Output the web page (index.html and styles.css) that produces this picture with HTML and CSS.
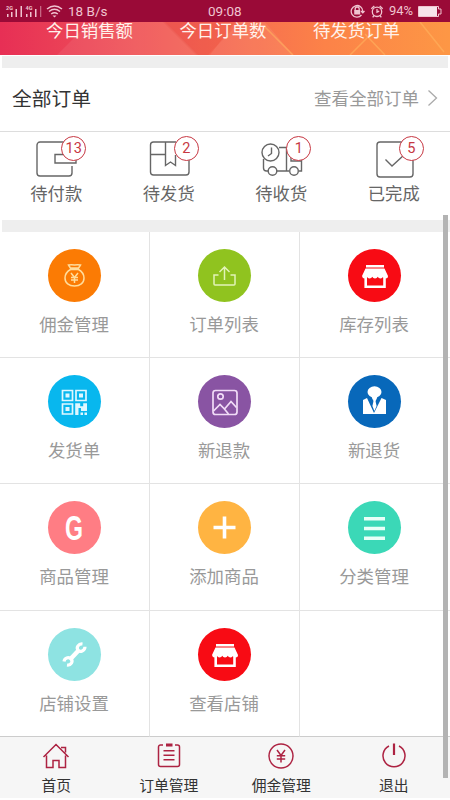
FILE: index.html
```html
<!DOCTYPE html>
<html lang="zh-CN">
<head>
<meta charset="utf-8">
<meta name="viewport" content="width=device-width, initial-scale=1">
<title>全部订单</title>
<link rel="stylesheet" href="styles.css">
</head>
<body>
<svg class="defs" aria-hidden="true">
  <symbol id="shop" viewBox="0 0 53 53">
    <path fill="#fff" d="M18 16h18v2.500H18zM17.500 19.500h19L40 27q0 2.500-2.500 2.500T35 27.800q-.5 1.700-2.500 1.700t-2.700-1.700Q29 29.500 27 29.500t-2.700-1.700Q23.500 29.500 21.500 29.500T19 27.800q-.5 1.700-2.500 1.700T14 27z"/>
    <path fill="none" stroke="#fff" stroke-width="2.600" d="M17.700 28v9.700h18.800V28"/>
  </symbol>
</svg>
<div class="screen">
  <header class="status">
    <svg class="signals" width="57" height="22" viewBox="0 0 57 22">
      <g fill="#f0c4d0"><path d="M7 14h1.500v3H7zM11 12h1.500v5H11zM15.500 9H17v8h-1.500zM20.500 6H22v11h-1.500zM26 14h1.500v3H26zM30 12h1.500v5H30zM35 9h1.500v8H35z"/><path opacity=".5" d="M40 6h1.300v11H40z"/></g>
      <text x="6" y="10" class="gen">2G</text><text x="25.500" y="10" class="gen">4G</text>
      <g fill="none" stroke="#f0c4d0" stroke-width="1.500"><path d="M47 9q7.500-6 15 0M49 11.500q5.500-4.500 11 0M51.200 14q3.300-2.600 6.600 0"/></g><path fill="#f0c4d0" d="M52.500 15.500h4l-2 2z"/>
    </svg>
    <span class="speed">18 B/s</span>
    <span class="time">09:08</span>
    <svg class="sys" width="38" height="22" viewBox="0 0 38 22">
      <g fill="none" stroke="#f0c4d0" stroke-width="1.300"><path d="M11.500 15a5.800 5.800 0 1 1 1.300-3.500M11 11l1.800 1.800L14.500 11M5.200 10.500V9a2 2 0 0 1 4 0v1.500"/><circle cx="27" cy="11.800" r="4.700"/><path d="M27 9v3.200l2.200-1M21.300 8.800l3-2.800M32.700 8.800l-3-2.800M24 15.500l-1.300 1.800M30 15.500l1.300 1.800"/></g><path fill="#f0c4d0" d="M4.200 10h6v4.500h-6z"/>
    </svg>
    <span class="percent">94%</span>
    <svg class="battery" width="26" height="22" viewBox="0 0 26 22"><path fill="none" stroke="#f0c4d0" d="M1.500 6.500h20v2.500H24v5h-2.500v2.500h-20z"/><path fill="#f7e3ea" d="M2 7h18v9H2z"/></svg>
  </header>

  <section class="banner">
    <svg class="facets" width="450" height="33" viewBox="0 0 450 33">
      <path fill="#fff" opacity=".07" d="M57 33 90 0h75l33 33zM210 33l25-33h30l28 33z"/>
      <path fill="#d8302a" opacity=".13" d="M163 0l33 33h12L240 0z"/>
      <path fill="none" stroke="#ffb45f" stroke-width="1.500" opacity=".6" d="M265 5l28 28M350 33l22-22M365 12l20 21M420 0l24 30"/>
    </svg>
    <span>今日销售额</span><span>今日订单数</span><span>待发货订单</span>
  </section>

  <div class="gap gap-top"></div>

  <section class="orders">
    <div class="orders-head">
      <h1>全部订单</h1>
      <a>查看全部订单<svg width="12" height="18" viewBox="0 0 12 18"><path fill="none" stroke="#aaa" stroke-width="1.300" d="M1.500 1.500 9.500 9l-8 7.500"/></svg></a>
    </div>
    <div class="order-types">
      <div class="order"><div class="pic">
        <svg width="42" height="42" viewBox="0 0 42 42"><path d="M30 4H4a3 3 0 0 0-3 3v28a3 3 0 0 0 3 3h29a3 3 0 0 0 3-3v-7M40 22v3H19V16.500h10"/></svg><b>13</b></div><span>待付款</span></div>
      <div class="order"><div class="pic">
        <svg width="42" height="42" viewBox="0 0 42 42"><path d="M27 4H4.500a3 3 0 0 0-3 3v27a3 3 0 0 0 3 3H37a3 3 0 0 0 3-3V20M1.500 16.500h15M16.500 4v23.500l5-3.500 5 3.500V17"/></svg><b>2</b></div><span>待发货</span></div>
      <div class="order"><div class="pic">
        <svg width="42" height="42" viewBox="0 0 42 42"><circle cx="9.500" cy="14.500" r="8.500"/><path d="M10.500 9.500v6l-3.500 2.500M18 9.500h8M25.500 10v23M2.500 21v9q0 3 3 3H7M16 33h12M38 33h2.500V20M30 17v6h10"/><circle cx="11.500" cy="33" r="4.300"/><circle cx="33" cy="33" r="4.300"/></svg><b>1</b></div><span>待收货</span></div>
      <div class="order"><div class="pic">
        <svg width="42" height="42" viewBox="0 0 42 42"><path d="M28 4H6a3 3 0 0 0-3 3v29a3 3 0 0 0 3 3h30a3 3 0 0 0 3-3V20M11.500 21.500l6.500 6.500L30 17"/></svg><b>5</b></div><span>已完成</span></div>
    </div>
  </section>

  <div class="gap gap-mid"></div>

  <main class="grid">
    <div class="cell"><svg class="disc orange" viewBox="0 0 53 53"><path fill="none" stroke="#ffdc9b" stroke-width="1.500" d="M22.500 20.500c-3.500 2-5.500 5-5.500 8.500 0 5 4 8 9.500 8s9.500-3 9.500-8c0-3.500-2-6.500-5.500-8.500zM23 20l-2.500-4q3-.5 6 0 3-.5 6 0L30 20M22 19h9M23 24l3.500 4.500L30 24M26.500 28.500V34M23 28.500h7M23 31h7"/></svg><span>佣金管理</span></div>
    <div class="cell"><svg class="disc green" viewBox="0 0 53 53"><path fill="none" stroke="#e2f3b8" stroke-width="1.500" d="M20.500 26H16v9q0 1 1 1h19q1 0 1-1v-9h-4.500M26.500 31V18.500M21.500 23l5-5 5 5"/></svg><span>订单列表</span></div>
    <div class="cell"><svg class="disc red" viewBox="0 0 53 53"><use href="#shop"/></svg><span>库存列表</span></div>

    <div class="cell"><svg class="disc cyan" viewBox="0 0 53 53"><path fill="none" stroke="#dff7ff" stroke-width="1.700" d="M14.500 15.500h10v10h-10zM28 15.500h10v10H28zM14.500 29h10v10h-10z"/><path fill="#dff7ff" d="M17.500 18.500h4v4h-4zM31 18.500h4v4h-4zM17.500 32h4v4h-4zM27.200 28.200h5v3h3v-3H39V36h-6v-3h-2.500v7h-3.300zM32.500 37.500h2.500V40h-2.500zM36.500 37.500H39V40h-2.500z"/></svg><span>发货单</span></div>
    <div class="cell"><svg class="disc purple" viewBox="0 0 53 53"><g fill="none" stroke="#f1dcf7" stroke-width="1.700"><rect x="15" y="15.500" width="24" height="24" rx="2.500"/><circle cx="22.500" cy="21.500" r="2.700"/><path d="M15.500 36l6.500-6.500 4.500 4.500 6.500-7.500 5.500 6M26 33.500l4.500 5.500"/></g></svg><span>新退款</span></div>
    <div class="cell"><svg class="disc blue" viewBox="0 0 53 53"><g fill="#fff"><ellipse cx="26.500" cy="17" rx="7" ry="5.800"/><path d="M23.500 21h6l-1 3.500h-4zM15 25l4-2 7 15 7.500-15 4.500 2v14H15z"/><path d="M25 24h3.200l-.6 2.500 1 4.500-2.200 5-2-5 1-4.500z"/></g></svg><span>新退货</span></div>

    <div class="cell"><svg class="disc pink" viewBox="0 0 53 53"><text x="17" y="39" textLength="18" lengthAdjust="spacingAndGlyphs" class="letter">G</text></svg><span>商品管理</span></div>
    <div class="cell"><svg class="disc amber" viewBox="0 0 53 53"><path stroke="#fff" stroke-width="3.600" d="M15.500 26.500h22M26.500 15.500v22"/></svg><span>添加商品</span></div>
    <div class="cell"><svg class="disc teal" viewBox="0 0 53 53"><path stroke="#e9fff8" stroke-width="3.500" d="M16 17.700h21M16 27.500h21M16 37.200h21"/></svg><span>分类管理</span></div>

    <div class="cell"><svg class="disc aqua" viewBox="0 0 53 53"><path stroke="#fff" stroke-width="4.500" d="M22.500 31l8.500-9"/><path fill="none" stroke="#fff" stroke-width="3.200" d="M34.500 16c-4-.5-6.500 3.500-4.500 6s6.800 1 7-3.300M19 37c4 .5 6.500-3.500 4-6s-6.500-1-7 2.500"/></svg><span>店铺设置</span></div>
    <div class="cell"><svg class="disc red" viewBox="0 0 53 53"><use href="#shop"/></svg><span>查看店铺</span></div>
    <div class="cell"></div>
  </main>

  <nav class="tabs">
    <div class="tab"><svg width="28" height="28" viewBox="0 0 28 28"><path d="M1.500 15 14 2.500 26.500 15M4.500 13.500v12H11V18.500h6v7h6.500v-12M19 5.500h4.500v5"/></svg><span>首页</span></div>
    <div class="tab"><svg width="28" height="28" viewBox="0 0 28 28"><path d="M8 3H5.500a2 2 0 0 0-2 2v17.500a2 2 0 0 0 2 2h17a2 2 0 0 0 2-2V5a2 2 0 0 0-2-2H20M8.500 8.700h11M8.500 13.200h11M8.500 17.800h11"/><path stroke-width="3" d="M11 3h6.500"/></svg><span>订单管理</span></div>
    <div class="tab"><svg width="28" height="28" viewBox="0 0 28 28"><circle cx="14" cy="14" r="12"/><path d="M10 8l4 5.500L18 8M14 13.500V20.500M9.800 13.800h8.400M9.800 17h8.400"/></svg><span>佣金管理</span></div>
    <div class="tab"><svg width="28" height="28" viewBox="0 0 28 28"><path d="M9 4a11 11 0 1 0 10 0"/><path stroke-width="2.200" d="M14 1.500v11.500"/></svg><span>退出</span></div>
  </nav>
  <div class="scrollbar"></div>
</div>
</body>
</html>
```
FILE: styles.css
```css
* { box-sizing: border-box; }
body {
  margin: 0;
  background: #fff;
  font-family: "Noto Sans CJK SC", sans-serif;
}
.defs { position: absolute; width: 0; height: 0; }
.screen {
  position: relative;
  width: 450px;
  height: 800px;
  overflow: hidden;
  display: flex;
  flex-direction: column;
}
svg { display: block; flex: none; }

.status {
  height: 22px;
  flex: none;
  display: grid;
  grid-template-columns: 68px 140px 142px 39px 28px 1fr;
  align-items: center;
  background: #9a0a37;
  color: #f0c4d0;
  font: 13.5px/22px Roboto, sans-serif;
  white-space: nowrap;
}
.percent { font-size: 13px; }
.signals { overflow: visible; }
.gen { font: bold 5.5px Roboto, sans-serif; fill: #f0c4d0; }

.banner {
  position: relative;
  height: 33px;
  flex: none;
  padding-left: 46px;
  overflow: hidden;
  display: flex;
  gap: 46.5px;
  background: linear-gradient(90deg, #e72f55 0%, #ef5458 30%, #f66c51 52%, #fc8248 72%, #fd9745 100%);
  color: #fff2ec;
  font-size: 17.4px;
  line-height: 16px;
}
.banner span { position: relative; height: 22px; overflow: hidden; white-space: nowrap; }
.facets { position: absolute; inset: 0; }

.gap { flex: none; background: #eee; }
.gap-top { height: 12px; margin: 1px 2px 0; }
.gap-mid { height: 12px; margin-left: 2px; }

.orders { height: 152px; flex: none; }
.orders-head {
  height: 64px;
  padding: 0 11px 4px 12px;
  display: flex;
  align-items: center;
  justify-content: space-between;
  border-bottom: 1px solid #ddd;
}
h1 { margin: 0; color: #333; font-size: 19.8px; font-weight: 400; line-height: 30px; }
.orders-head a {
  display: flex;
  align-items: center;
  gap: 8px;
  color: #999;
  font-size: 17.5px;
  line-height: 30px;
}
.order-types { display: grid; grid-template-columns: repeat(4, 1fr); }
.order {
  padding-top: 6px;
  display: flex;
  flex-direction: column;
  align-items: center;
  color: #666;
  font-size: 17.3px;
  line-height: 24px;
}
.pic { position: relative; width: 42px; height: 43px; }
.pic svg { margin-left: 1px; fill: none; stroke: #666; stroke-width: 1.4; }
.pic b {
  position: absolute;
  left: 26px;
  top: -2px;
  width: 25px;
  height: 25px;
  border: 1.5px solid #c73843;
  border-radius: 50%;
  background: #fff;
  color: #c73843;
  font: 400 14.5px/23px Roboto, sans-serif;
  text-align: center;
}

.grid {
  height: 505px;
  flex: none;
  display: grid;
  grid-template-columns: 150px 150px 150px;
  grid-template-rows: 126px 126px 127px 126px;
}
.cell {
  padding-top: 17px;
  padding-right: 1px;
  border-right: 1px solid #e3e3e3;
  border-bottom: 1px solid #e3e3e3;
  display: flex;
  flex-direction: column;
  align-items: center;
  gap: 9px;
  color: #999;
  font-size: 17.4px;
  line-height: 26px;
}
.cell:nth-child(3n) { border-right: 0; padding-right: 2px; }
.cell:nth-child(n+10) { border-bottom-color: #ccc; }
.disc { width: 53px; height: 53px; border-radius: 50%; }
.orange { background: #fb7b04; }
.green { background: #90c31f; }
.red { background: #f80b14; }
.cyan { background: #08b7ee; }
.purple { background: #8954a3; }
.blue { background: #0868ba; }
.pink { background: #ff7d84; }
.amber { background: #ffb442; }
.teal { background: #3bd8b7; }
.aqua { background: #8ee3e2; }
.letter { font: bold 35px "Liberation Sans", sans-serif; fill: #fff; }

.tabs {
  height: 61px;
  flex: none;
  display: grid;
  grid-template-columns: repeat(4, 1fr);
  background: #f6f6f6;
}
.tab {
  padding-top: 5px;
  display: flex;
  flex-direction: column;
  align-items: center;
  gap: 4px;
  color: #333;
  font-size: 14.8px;
  line-height: 22px;
}
.tab svg { fill: none; stroke: #ad2342; stroke-width: 1.5; }

.scrollbar {
  position: absolute;
  left: 443px;
  top: 215px;
  width: 5px;
  height: 563px;
  background: #b3b3b3;
}
```
